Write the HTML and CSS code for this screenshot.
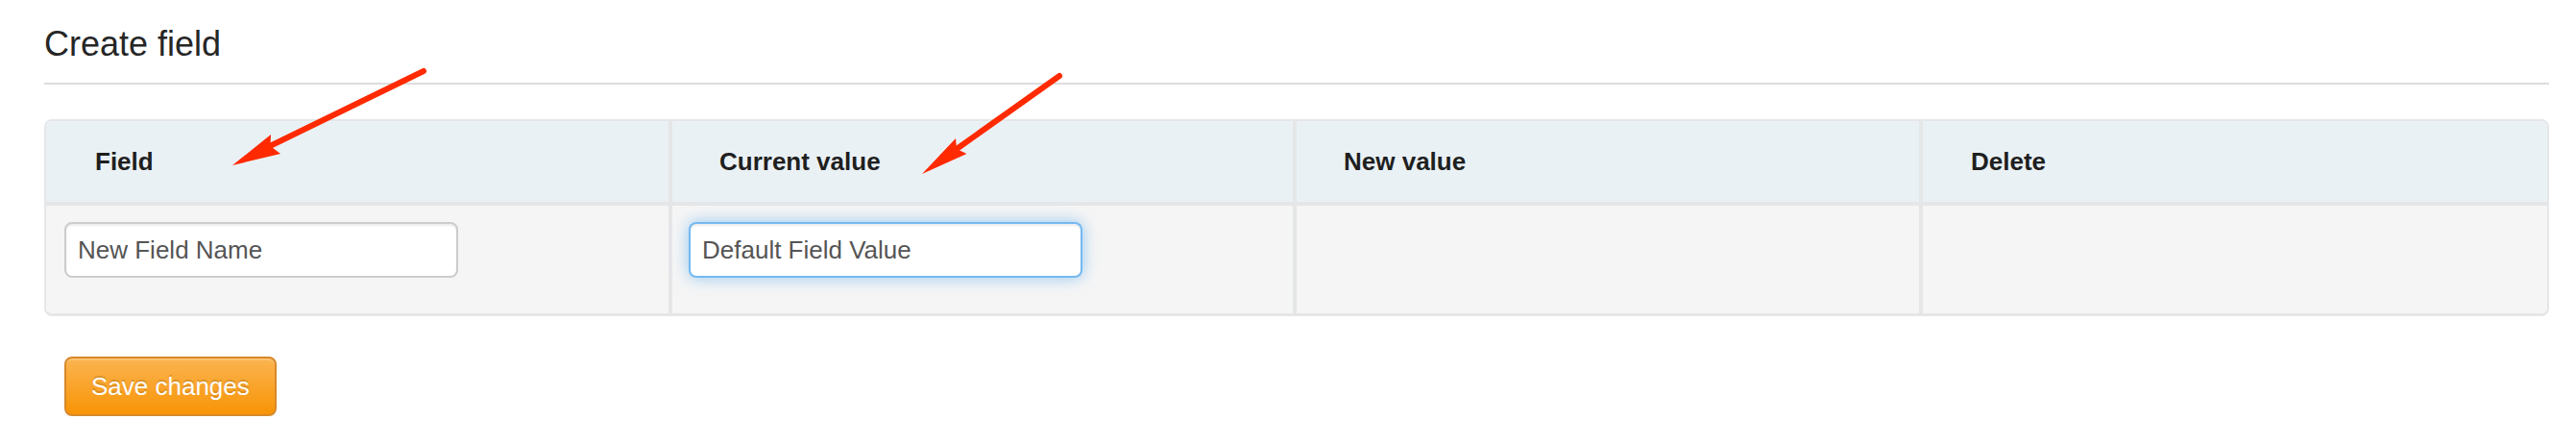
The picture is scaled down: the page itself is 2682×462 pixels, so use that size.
FILE: index.html
```html
<!DOCTYPE html>
<html lang="en">
<head>
  <meta charset="UTF-8">
  <meta name="viewport" content="width=device-width, initial-scale=1.0">
  <title>Create field</title>
  <link rel="stylesheet" href="styles.css">
</head>
<body>
  <h2 class="page-title">Create field</h2>

  <table class="fields-table">
    <thead>
      <tr>
        <th class="col-field">Field</th>
        <th class="col-current">Current value</th>
        <th class="col-new">New value</th>
        <th>Delete</th>
      </tr>
    </thead>
    <tbody>
      <tr>
        <td><input class="field-input" type="text" value="New Field Name"></td>
        <td><input class="field-input focused" type="text" value="Default Field Value"></td>
        <td></td>
        <td></td>
      </tr>
    </tbody>
  </table>

  <button class="save-button">Save changes</button>

  <!-- annotation arrows drawn over the screenshot -->
  <svg class="arrows" width="2682" height="462" viewBox="0 0 2682 462">
    <line x1="281" y1="152" x2="441" y2="74" />
    <polygon points="242,172 282,140 281.5,152 292,160" />
    <line x1="996" y1="155" x2="1103" y2="79" />
    <polygon points="960,181 995,144 996,155 1006.5,160" />
  </svg>
</body>
</html>
```

FILE: styles.css
```css
body {
  margin: 0;
  padding: 26px 28px 0 46px;
  font-family: "Liberation Sans", Arial, sans-serif;
  color: #222;
  background: #fff;
  position: relative;
}

.page-title {
  margin: 0;
  padding-bottom: 20px;
  font-size: 36px;
  line-height: 40px;
  font-weight: normal;
  color: #262626;
  border-bottom: 2px solid #dddddd;
}

.fields-table {
  width: 100%;
  margin-top: 36px;
  table-layout: fixed;
  border-collapse: separate;
  border-spacing: 0;
  border: 2px solid #e5e6e8;
  border-bottom-width: 3px;
  border-radius: 8px;
}

.fields-table th {
  box-sizing: border-box;
  height: 88px;
  padding: 0 0 0 50px;
  text-align: left;
  vertical-align: middle;
  font-size: 26px;
  line-height: 30px;
  font-weight: bold;
  color: #1f1f1f;
  background: #eaf1f5;
  border-bottom: 4px solid #e5e6e8;
}

.fields-table th.col-field {
  width: 648px;
  padding-left: 51px;
}

.fields-table th.col-current {
  width: 650px;
  padding-left: 49px;
}

.fields-table th.col-new {
  width: 652px;
  padding-left: 49px;
}

.fields-table td {
  height: 78px;
  padding: 17px 18px;
  vertical-align: top;
  background: #f5f5f5;
}

.fields-table td:first-child {
  padding-left: 19px;
}

.fields-table td + td {
  padding-left: 17px;
}

.fields-table th + th,
.fields-table td + td {
  border-left: 4px solid #e5e6e8;
}

.fields-table th:first-child {
  border-top-left-radius: 6px;
}

.fields-table th:last-child {
  border-top-right-radius: 6px;
}

.fields-table td:first-child {
  border-bottom-left-radius: 6px;
}

.fields-table td:last-child {
  border-bottom-right-radius: 6px;
}

.field-input {
  display: block;
  box-sizing: border-box;
  width: 410px;
  height: 58px;
  margin: 0 0 20px;
  padding: 0 12px;
  font-family: "Liberation Sans", Arial, sans-serif;
  font-size: 26px;
  color: #555;
  background: #fff;
  border: 2px solid #cccccc;
  border-radius: 8px;
  box-shadow: inset 0 2px 2px rgba(0, 0, 0, 0.075);
  outline: none;
}

.field-input.focused {
  border-color: rgba(82, 168, 236, 0.8);
  box-shadow: inset 0 2px 2px rgba(0, 0, 0, 0.075), 0 0 16px rgba(82, 168, 236, 0.6);
}

.save-button {
  display: block;
  height: 62px;
  margin: 42px 0 0 21px;
  padding: 0 26px;
  font-family: "Liberation Sans", Arial, sans-serif;
  font-size: 26px;
  color: #fff;
  text-shadow: 0 -2px 0 rgba(0, 0, 0, 0.15);
  background: linear-gradient(to bottom, #fbb450, #f89406);
  border: 2px solid #d8892a;
  border-radius: 8px;
  box-shadow: inset 0 2px 0 rgba(255, 255, 255, 0.2), 0 2px 4px rgba(0, 0, 0, 0.05);
  cursor: pointer;
}

.arrows {
  position: absolute;
  top: 0;
  left: 0;
  pointer-events: none;
}

.arrows line {
  stroke: #ff2a00;
  stroke-width: 6;
  stroke-linecap: round;
}

.arrows polygon {
  fill: #ff2a00;
}
```
